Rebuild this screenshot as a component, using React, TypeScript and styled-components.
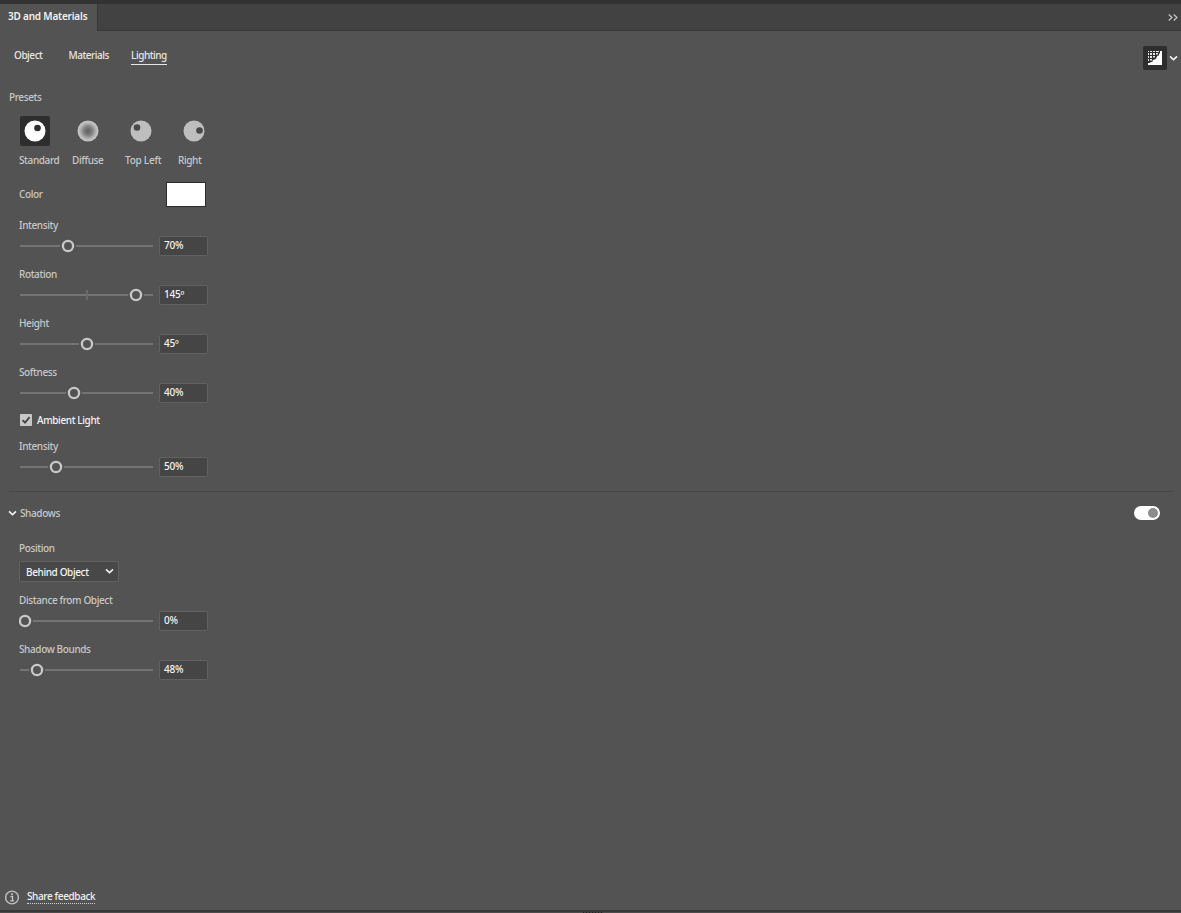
import React, { useState } from "react";
import styled, { createGlobalStyle } from "styled-components";

/* ===================== STYLES ===================== */

const GlobalStyle = createGlobalStyle`
  * {
    box-sizing: border-box;
  }

  body {
    margin: 0;
    background: #535353;
    overflow: hidden;
  }

  button {
    font: inherit;
    letter-spacing: inherit;
    padding: 0;
    border: none;
    background: none;
    cursor: pointer;
  }
`;

const Panel = styled.div`
  display: flex;
  flex-direction: column;
  height: 100vh;
  background: #535353;
  border-top: 4px solid #323232;
  color: #c8c8c8;
  font-family: "Noto Sans", "Open Sans", sans-serif;
  font-size: 10px;
  font-weight: 500;
  line-height: 16px;
  letter-spacing: -0.38px;
`;

const TitleBar = styled.div`
  display: flex;
  justify-content: space-between;
  height: 27px;
`;

const PanelTab = styled.div`
  width: 97px;
  padding: 4px 0 0 8px;
  color: #f2f2f2;
  font-weight: 600;
  letter-spacing: -0.2px;
  white-space: nowrap;
`;

const TitleFill = styled.div`
  display: flex;
  flex: 1;
  justify-content: flex-end;
  padding: 10px 3px 0 0;
  background: #424242;
  border-left: 1px solid #383838;
  border-bottom: 1px solid #383838;
`;

const Header = styled.div`
  display: flex;
  justify-content: space-between;
  height: 58px;
  padding: 15px 3px 0 14px;
`;

const Tabs = styled.div`
  display: flex;
  align-items: flex-start;
  padding-top: 1px;
`;

const Tab = styled.button<{ $active: boolean; $gap: number }>`
  height: 18px;
  margin-right: ${({ $gap }) => $gap}px;
  padding-bottom: 1px;
  color: #e6e6e6;
  letter-spacing: -0.46px;
  border-bottom: 1px solid ${({ $active }) => ($active ? "#e6e6e6" : "transparent")};
`;

const RenderTools = styled.div`
  display: flex;
  align-items: center;
  gap: 2px;
  height: 24px;
`;

const RenderButton = styled.button`
  display: flex;
  align-items: center;
  justify-content: center;
  width: 24px;
  height: 24px;
  border-radius: 2px;
  background: #2e2e2e;
`;

const SectionTitle = styled.div`
  height: 27px;
  padding-left: 9px;
`;

const Presets = styled.div`
  display: flex;
  height: 66px;
  padding-left: 19px;
`;

const Preset = styled.button`
  display: flex;
  flex-direction: column;
  align-items: flex-start;
  gap: 6px;
  width: 53px;
  color: inherit;
  text-align: left;
  white-space: nowrap;
`;

const PresetIcon = styled.span<{ $active: boolean }>`
  display: flex;
  align-items: center;
  justify-content: center;
  width: 30px;
  height: 30px;
  margin-left: 1px;
  border-radius: 2px;
  background: ${({ $active }) => ($active ? "#2e2e2e" : "transparent")};
`;

const PresetName = styled.span<{ $spacing?: number }>`
  letter-spacing: ${({ $spacing = -0.38 }) => $spacing}px;
`;

const ColorRow = styled.div`
  display: flex;
  justify-content: space-between;
  width: 206px;
  height: 25px;
  margin-bottom: 11px;
  padding-left: 19px;
  line-height: 24px;
`;

const Swatch = styled.button`
  width: 40px;
  height: 25px;
  background: #fff;
  border: 1px solid #2b2b2b;
`;

const Field = styled.div`
  width: 208px;
  height: 49px;
  padding-left: 19px;
`;

const FieldLabel = styled.div`
  height: 18px;
  line-height: 14px;
`;

const FieldRow = styled.div`
  display: flex;
  align-items: center;
  justify-content: space-between;
  height: 20px;
`;

const ValueBox = styled.div`
  width: 49px;
  height: 20px;
  padding-left: 4px;
  color: #f4f4f4;
  letter-spacing: -0.2px;
  background: #454545;
  border: 1px solid #616161;
  border-radius: 2px;
`;

const CheckRow = styled.label`
  display: flex;
  align-items: center;
  gap: 5px;
  height: 16px;
  margin: -2px 0 11px;
  padding-left: 20px;
  color: #f4f4f4;
`;

const CheckBox = styled.span`
  display: flex;
  width: 12px;
  height: 12px;
  border-radius: 1px;
  background: #c8c8c8;
`;

const Divider = styled.div`
  height: 1px;
  margin: 3px 8px 13px 9px;
  background: #474747;
`;

const ShadowsHeader = styled.div`
  display: flex;
  align-items: center;
  justify-content: space-between;
  height: 16px;
  padding: 0 21px 0 8px;
  margin-bottom: 19px;
`;

const ShadowsTitle = styled.div`
  display: flex;
  align-items: center;
  gap: 3px;
`;

const Toggle = styled.button<{ $on: boolean }>`
  display: flex;
  align-items: center;
  justify-content: ${({ $on }) => ($on ? "flex-end" : "flex-start")};
  width: 26px;
  height: 14px;
  padding: 0 2px;
  border-radius: 7px;
  background: #fff;
`;

const ToggleKnob = styled.span`
  width: 10px;
  height: 10px;
  border-radius: 50%;
  background: #8c8c8c;
`;

const PositionField = styled.div`
  height: 53px;
  padding-left: 19px;
`;

const Select = styled.button`
  display: flex;
  align-items: center;
  justify-content: space-between;
  width: 100px;
  height: 21px;
  margin-top: 5px;
  padding: 0 4px 0 6px;
  color: #f4f4f4;
  background: #484848;
  border: 1px solid #616161;
  border-radius: 2px;
`;

const Footer = styled.div`
  display: flex;
  align-items: center;
  gap: 7px;
  height: 26px;
  margin-top: auto;
  padding-left: 5px;
`;

const FeedbackLink = styled.a`
  height: 14px;
  line-height: 13px;
  color: #f0f0f0;
  border-bottom: 1px dotted #d0d0d0;
`;

const BottomEdge = styled.div`
  display: flex;
  justify-content: center;
  height: 3px;
  background: #383838;
  border-bottom: 1px solid #4c4c4c;
`;

const Grip = styled.div`
  width: 20px;
  height: 1px;
  margin: 2px 0 0 4px;
  background: repeating-linear-gradient(90deg, #202020 0 1px, #444 1px 3px);
`;

/* ===================== ICONS ===================== */

const Chevron = () => (
  <svg width="9" height="7" viewBox="0 0 9 7" fill="none">
    <path d="M1 1.3 4.5 4.6 8 1.3" stroke="#f2f2f2" strokeWidth="1.6" />
  </svg>
);

const CollapseIcon = () => (
  <svg width="10" height="7" viewBox="0 0 10 7" fill="none">
    <path d="M.7.5 4 3.5.7 6.5M5.7.5 9 3.5 5.7 6.5" stroke="#c8c8c8" strokeWidth="1.2" />
  </svg>
);

const RenderIcon = () => (
  <svg width="14" height="14" viewBox="0 0 14 14">
    <path
      d="M14 0V14H0V12H1.5L3 11H4.5V9.5L6 8.5H7L8.5 7V6L10 4.5H11V3L12 2V0Z"
      fill="#fff"
    />
    <path
      d="M0 0h1v1H0zM2 0h2v1H2zM5 0h2v1H5zM8 0h3v1H8zM0 2h1v2H0zM2 2h2v2H2zM5 2h2v2H5zM8 2h2v1.5H8zM0 5h1v2H0zM2 5h2v2H2zM5 5h2v1.5H5zM0 8h1v2H0zM2 8h2v1.5H2z"
      fill="#e8e8e8"
    />
  </svg>
);

const InfoIcon = () => (
  <svg width="15" height="15" viewBox="0 0 15 15" fill="none">
    <circle cx="7" cy="7.5" r="6.4" stroke="#c0c0c0" strokeWidth="1.4" />
    <path d="M5.5 6.5h2v4M5.2 10.8h3.8" stroke="#c8c8c8" strokeWidth="1.3" />
    <circle cx="7" cy="4" r="1" fill="#c8c8c8" />
  </svg>
);

const CheckIcon = () => (
  <svg width="12" height="12" viewBox="0 0 12 12" fill="none">
    <path d="M2.5 6.2 5 8.7 9.6 3.2" stroke="#444" strokeWidth="1.8" />
  </svg>
);

/* ===================== DATA ===================== */

interface PresetItem {
  name: string;
  spacing?: number;
  dot?: [number, number];
}

const presets: PresetItem[] = [
  { name: "Standard", dot: [13.5, 8] },
  { name: "Diffuse" },
  { name: "Top Left", spacing: -0.25, dot: [7, 7.5] },
  { name: "Right", dot: [16.5, 10.5] },
];

const SphereIcon = ({ dot, active }: { dot?: [number, number]; active: boolean }) => (
  <svg width="22" height="22" viewBox="0 0 22 22">
    <defs>
      <radialGradient id="diffuse">
        <stop offset="0.1" stopColor="#646464" />
        <stop offset="0.45" stopColor="#858585" />
        <stop offset="0.8" stopColor="#bcbcbc" />
        <stop offset="1" stopColor="#c4c4c4" />
      </radialGradient>
    </defs>
    <circle
      cx="11"
      cy="11"
      r="10.5"
      fill={!dot ? "url(#diffuse)" : active ? "#fff" : "#bebebe"}
    />
    {dot && <circle cx={dot[0]} cy={dot[1]} r="3.3" fill={active ? "#2e2e2e" : "#484848"} />}
  </svg>
);

/* ===================== SLIDER ===================== */

interface SliderProps {
  label: string;
  value: string;
  knob: number;
  tick?: boolean;
}

const SliderField: React.FC<SliderProps> = ({ label, value, knob, tick }) => (
  <Field>
    <FieldLabel>{label}</FieldLabel>
    <FieldRow>
      <svg width="135" height="20" viewBox="0 0 135 20" fill="none">
        <path d="M1 10H134" stroke="#747474" strokeWidth="2" />
        {tick && <path d="M68 5V15" stroke="#6a6a6a" strokeWidth="2" />}
        <circle cx={knob} cy="10" r="8" fill="#535353" />
        <circle cx={knob} cy="10" r="5.1" stroke="#c8c8c8" strokeWidth="2.3" />
      </svg>
      <ValueBox>{value}</ValueBox>
    </FieldRow>
  </Field>
);

/* ===================== COMPONENT ===================== */

const App: React.FC = () => {
  const [activeTab, setActiveTab] = useState("Lighting");
  const [preset, setPreset] = useState("Standard");
  const [ambient, setAmbient] = useState(true);
  const [shadows, setShadows] = useState(true);

  return (
    <Panel>
      <GlobalStyle />
      <TitleBar>
        <PanelTab>3D and Materials</PanelTab>
        <TitleFill>
          <CollapseIcon />
        </TitleFill>
      </TitleBar>

      <Header>
        <Tabs>
          <Tab $active={activeTab === "Object"} $gap={26} onClick={() => setActiveTab("Object")}>
            Object
          </Tab>
          <Tab
            $active={activeTab === "Materials"}
            $gap={22}
            onClick={() => setActiveTab("Materials")}
          >
            Materials
          </Tab>
          <Tab $active={activeTab === "Lighting"} $gap={0} onClick={() => setActiveTab("Lighting")}>
            Lighting
          </Tab>
        </Tabs>
        <RenderTools>
          <RenderButton>
            <RenderIcon />
          </RenderButton>
          <Chevron />
        </RenderTools>
      </Header>

      <SectionTitle>Presets</SectionTitle>
      <Presets>
        {presets.map((p) => (
          <Preset key={p.name} onClick={() => setPreset(p.name)}>
            <PresetIcon $active={preset === p.name}>
              <SphereIcon dot={p.dot} active={preset === p.name} />
            </PresetIcon>
            <PresetName $spacing={p.spacing}>{p.name}</PresetName>
          </Preset>
        ))}
      </Presets>

      <ColorRow>
        Color
        <Swatch />
      </ColorRow>

      <SliderField label="Intensity" value="70%" knob={49} />
      <SliderField label="Rotation" value="145º" knob={117} tick />
      <SliderField label="Height" value="45º" knob={68} />
      <SliderField label="Softness" value="40%" knob={55} />

      <CheckRow onClick={() => setAmbient(!ambient)}>
        <CheckBox>{ambient && <CheckIcon />}</CheckBox>
        Ambient Light
      </CheckRow>
      <SliderField label="Intensity" value="50%" knob={37} />

      <Divider />

      <ShadowsHeader>
        <ShadowsTitle>
          <Chevron />
          Shadows
        </ShadowsTitle>
        <Toggle $on={shadows} onClick={() => setShadows(!shadows)}>
          <ToggleKnob />
        </Toggle>
      </ShadowsHeader>

      <PositionField>
        Position
        <Select>
          Behind Object
          <Chevron />
        </Select>
      </PositionField>
      <SliderField label="Distance from Object" value="0%" knob={6} />
      <SliderField label="Shadow Bounds" value="48%" knob={18} />

      <Footer>
        <InfoIcon />
        <FeedbackLink>Share feedback</FeedbackLink>
      </Footer>
      <BottomEdge>
        <Grip />
      </BottomEdge>
    </Panel>
  );
};

export default App;
